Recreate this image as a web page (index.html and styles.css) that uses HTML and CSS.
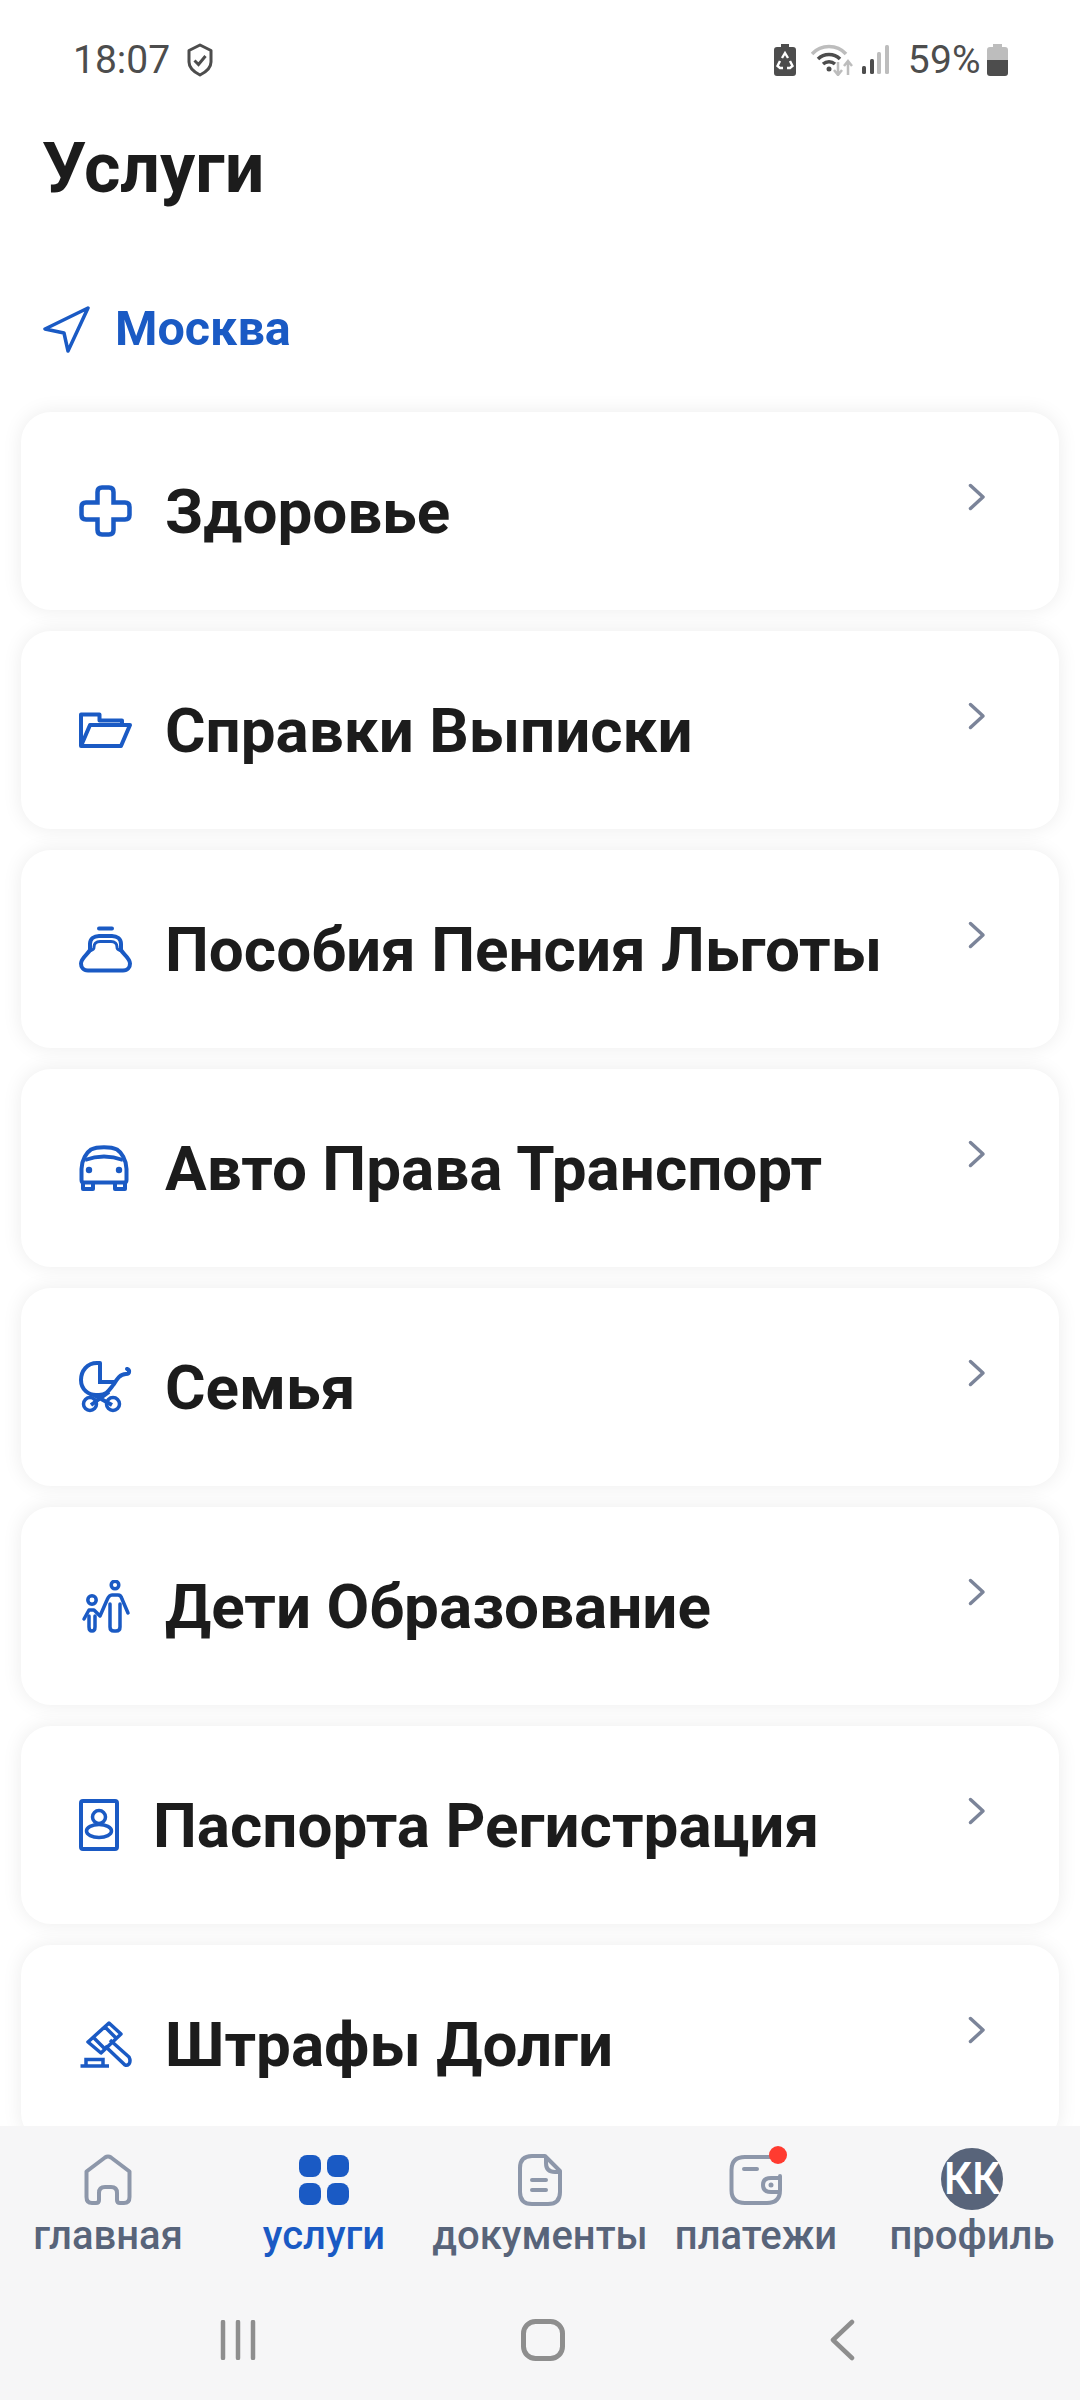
FILE: index.html
```html
<!DOCTYPE html>
<html lang="ru">
<head>
    <meta charset="UTF-8">
    <meta name="viewport" content="width=device-width, initial-scale=1.0">
    <title>Услуги</title>
    <link rel="stylesheet" href="styles.css">
</head>
<body>
    <div class="status-bar">
        <span class="status-time">18:07</span>
        <svg class="status-shield" width="26" height="34" viewBox="0 0 26 34"><path d="M13 2 24 7.500V19C24 25 19 29 13 32 7 29 2 25 2 19V7.500Z" fill="none" stroke="#4d4d4d" stroke-width="3" stroke-linejoin="round"/><path d="M7.500 17.500 11.500 21.500 18.500 13" fill="none" stroke="#4d4d4d" stroke-width="3"/></svg>
        <span class="status-spacer"></span>
        <svg class="status-saver" width="22" height="32" viewBox="0 0 22 32"><path d="M7 0H15V3H19Q22 3 22 6V29Q22 32 19 32H3Q0 32 0 29V6Q0 3 3 3H7Z" fill="#4d4d4d"/><path d="M8 14 11 9 14 14M16 17 18.500 22 16 24H13M9 24H6L3.500 22 6 17" fill="none" stroke="#fff" stroke-width="2.400"/></svg>
        <svg class="status-wifi" width="43" height="32" viewBox="0 0 43 32"><path d="M1 10C10 0 26 0 35 10" fill="none" stroke="#bdbdbd" stroke-width="3.500"/><path d="M7 15C13 9 23 9 29 15M12 20C15.500 17 20.500 17 24 20" fill="none" stroke="#4d4d4d" stroke-width="3.500"/><circle cx="18" cy="25" r="2.500" fill="#4d4d4d"/><path d="M27 18V30M23 26 27 31 31 26" fill="none" stroke="#bdbdbd" stroke-width="2.500"/><path d="M37 31V18M33 22 37 17 41 22" fill="none" stroke="#bdbdbd" stroke-width="2.500"/></svg>
        <svg class="status-signal" width="27" height="30" viewBox="0 0 27 30"><rect x="0" y="21" width="4" height="8" rx="1.500" fill="#4d4d4d"/><rect x="8" y="14" width="4" height="15" rx="1.500" fill="#4d4d4d"/><rect x="15" y="7" width="4" height="22" rx="1.500" fill="#bdbdbd"/><rect x="23" y="0" width="4" height="29" rx="1.500" fill="#bdbdbd"/></svg>
        <span class="status-percent">59%</span>
        <svg class="status-battery" width="21" height="32" viewBox="0 0 21 32"><path d="M6 0H15V3H18Q21 3 21 6V16H0V6Q0 3 3 3H6Z" fill="#bdbdbd"/><path d="M0 16H21V29Q21 32 18 32H3Q0 32 0 29Z" fill="#4d4d4d"/></svg>
    </div>

    <h1 class="page-title">Услуги</h1>

    <div class="location">
        <svg width="47" height="47" viewBox="0 0 47 47"><path d="M45 2 2 23 21 27 25 45Z" fill="none" stroke="#1a5ac4" stroke-width="3.500" stroke-linejoin="round"/></svg>
        <span>Москва</span>
    </div>

    <main class="service-list">
        <a class="service-card">
            <svg class="service-icon" width="53" height="52" viewBox="0 0 53 52"><path d="M23 2.500H30Q34.500 2.500 34.500 7V17.500H46Q50.500 17.500 50.500 22V30Q50.500 34.500 46 34.500H34.500V45Q34.500 49.500 30 49.500H23Q18.500 49.500 18.500 45V34.500H7Q2.500 34.500 2.500 30V22Q2.500 17.500 7 17.500H18.500V7Q18.500 2.500 23 2.500Z" fill="none" stroke="#1a5ac4" stroke-width="4.500"/></svg>
            <span class="service-name">Здоровье</span>
            <svg class="service-arrow" width="18" height="28" viewBox="0 0 18 28"><path d="M2.500 2.500 15 14 2.500 25.500" fill="none" stroke="#7b8499" stroke-width="3.500" stroke-linecap="round" stroke-linejoin="round"/></svg>
        </a>
        <a class="service-card">
            <svg class="service-icon" width="53" height="37" viewBox="0 0 53 37"><path d="M2 34V2.500H20.500V8.500H43V13" fill="none" stroke="#1a5ac4" stroke-width="4" stroke-linejoin="round"/><path d="M2 34 11 13H51L42 34Z" fill="none" stroke="#1a5ac4" stroke-width="4" stroke-linejoin="round"/></svg>
            <span class="service-name">Справки Выписки</span>
            <svg class="service-arrow" width="18" height="28" viewBox="0 0 18 28"><path d="M2.500 2.500 15 14 2.500 25.500" fill="none" stroke="#7b8499" stroke-width="3.500" stroke-linecap="round" stroke-linejoin="round"/></svg>
        </a>
        <a class="service-card">
            <svg class="service-icon" width="53" height="47" viewBox="0 0 53 47"><path d="M20 2.500H33" fill="none" stroke="#1a5ac4" stroke-width="4" stroke-linecap="round"/><path d="M9 44.500H44C49 44.500 51 41 51 37.500 51 32 44 28 42 24V18C42 13 38 10 33 10H20C15 10 11 13 11 18V24C9 28 2 32 2 37.500 2 41 4 44.500 9 44.500Z" fill="none" stroke="#1a5ac4" stroke-width="4"/><path d="M11 25C15 23 15 23 15 21 15 18 17 15.500 21 15.500H32C36 15.500 38 18 38 21 38 23 38 23 42 25" fill="none" stroke="#1a5ac4" stroke-width="3"/></svg>
            <span class="service-name">Пособия Пенсия Льготы</span>
            <svg class="service-arrow" width="18" height="28" viewBox="0 0 18 28"><path d="M2.500 2.500 15 14 2.500 25.500" fill="none" stroke="#7b8499" stroke-width="3.500" stroke-linecap="round" stroke-linejoin="round"/></svg>
        </a>
        <a class="service-card">
            <svg class="service-icon" width="53" height="46" viewBox="0 0 53 46"><path d="M2.500 35V24C2.500 15 8 7 12 4.500 18 1.500 32 1.500 38 4.500 42 7 47.500 15 47.500 24V35Q47.500 37.500 45 37.500H5Q2.500 37.500 2.500 35Z" fill="none" stroke="#1a5ac4" stroke-width="4"/><path d="M6 15C18 10.500 32 10.500 44 15" fill="none" stroke="#1a5ac4" stroke-width="4"/><circle cx="10" cy="25" r="3.200" fill="#1a5ac4"/><circle cx="40" cy="25" r="3.200" fill="#1a5ac4"/><path d="M4 37V44H14V37M36 37V44H46V37" fill="none" stroke="#1a5ac4" stroke-width="4" stroke-linejoin="round"/></svg>
            <span class="service-name">Авто Права Транспорт</span>
            <svg class="service-arrow" width="18" height="28" viewBox="0 0 18 28"><path d="M2.500 2.500 15 14 2.500 25.500" fill="none" stroke="#7b8499" stroke-width="3.500" stroke-linecap="round" stroke-linejoin="round"/></svg>
        </a>
        <a class="service-card">
            <svg class="service-icon" width="53" height="52" viewBox="0 0 53 52"><path d="M21 2H18C8 2 2 10 2 19 2 29 10 34 17 34H20C28 34 30 29 35 23 38 18 41 13 47 13 51 13 51 9 48 8" fill="none" stroke="#1a5ac4" stroke-width="4" stroke-linecap="round"/><path d="M21 2V21H37M15 34 33 44M30 31 12 44" fill="none" stroke="#1a5ac4" stroke-width="4"/><circle cx="11" cy="43" r="6.500" fill="none" stroke="#1a5ac4" stroke-width="3.500"/><circle cx="34" cy="43" r="6.500" fill="none" stroke="#1a5ac4" stroke-width="3.500"/></svg>
            <span class="service-name">Семья</span>
            <svg class="service-arrow" width="18" height="28" viewBox="0 0 18 28"><path d="M2.500 2.500 15 14 2.500 25.500" fill="none" stroke="#7b8499" stroke-width="3.500" stroke-linecap="round" stroke-linejoin="round"/></svg>
        </a>
        <a class="service-card">
            <svg class="service-icon" width="53" height="53" viewBox="0 0 53 53"><g transform="translate(4 0)" fill="none" stroke="#1a5ac4" stroke-width="3.500" stroke-linecap="round" stroke-linejoin="round"><circle cx="32" cy="5" r="3.800"/><circle cx="9" cy="20" r="4.200"/><path d="M1 39 6 30H11L17 36 24 20Q26 15 29 15H35Q38 15 39 19L45 33"/><path d="M27 24V47Q27 51 31 51H33Q37 51 37 47V24"/><path d="M6 36V47Q6 51 9 51 12 51 12 47V36"/></g></svg>
            <span class="service-name">Дети Образование</span>
            <svg class="service-arrow" width="18" height="28" viewBox="0 0 18 28"><path d="M2.500 2.500 15 14 2.500 25.500" fill="none" stroke="#7b8499" stroke-width="3.500" stroke-linecap="round" stroke-linejoin="round"/></svg>
        </a>
        <a class="service-card">
            <svg class="service-icon" width="41" height="52" viewBox="0 0 41 52"><rect x="2" y="2" width="36" height="48" rx="2" fill="none" stroke="#1a5ac4" stroke-width="4"/><ellipse cx="20" cy="18" rx="6.500" ry="6.500" fill="none" stroke="#1a5ac4" stroke-width="3.500"/><ellipse cx="20" cy="32" rx="12.500" ry="6.500" fill="none" stroke="#1a5ac4" stroke-width="3.500"/></svg>
            <span class="service-name">Паспорта Регистрация</span>
            <svg class="service-arrow" width="18" height="28" viewBox="0 0 18 28"><path d="M2.500 2.500 15 14 2.500 25.500" fill="none" stroke="#7b8499" stroke-width="3.500" stroke-linecap="round" stroke-linejoin="round"/></svg>
        </a>
        <a class="service-card">
            <svg class="service-icon" width="53" height="47" viewBox="0 0 53 47"><path d="M1.500 45H30M7 44V38.500H24V44" fill="none" stroke="#1a5ac4" stroke-width="3.500"/><path d="M9 21 30 2 42 13 22 32ZM14 16 26 28M26 6 37 17" fill="none" stroke="#1a5ac4" stroke-width="3.500" stroke-linejoin="round"/><path d="M31 19 50 36Q52 40 50 43 48 45 46 44L26 25" fill="none" stroke="#1a5ac4" stroke-width="3.500"/></svg>
            <span class="service-name">Штрафы Долги</span>
            <svg class="service-arrow" width="18" height="28" viewBox="0 0 18 28"><path d="M2.500 2.500 15 14 2.500 25.500" fill="none" stroke="#7b8499" stroke-width="3.500" stroke-linecap="round" stroke-linejoin="round"/></svg>
        </a>
    </main>

    <nav class="tab-bar">
        <a class="tab">
            <svg class="tab-icon" width="48" height="52" viewBox="0 0 48 52"><path d="M2.500 17.500 21 3.500Q24 1.500 27 3.500L45.500 17.500V43Q45.500 49 40 49H36Q33 49 33 46V39Q33 33 27 33H21Q15 33 15 39V46Q15 49 12 49H8Q2.500 49 2.500 43Z" fill="none" stroke="#8d97aa" stroke-width="4" stroke-linejoin="round"/></svg>
            <span>главная</span>
        </a>
        <a class="tab tab-active">
            <svg class="tab-icon" width="50" height="52" viewBox="0 0 50 52"><rect x="0" y="1" width="22" height="22" rx="8" fill="#1a5ac4"/><rect x="28" y="1" width="22" height="22" rx="8" fill="#1a5ac4"/><rect x="0" y="29" width="22" height="22" rx="8" fill="#1a5ac4"/><rect x="28" y="29" width="22" height="22" rx="8" fill="#1a5ac4"/></svg>
            <span>услуги</span>
        </a>
        <a class="tab">
            <svg class="tab-icon" width="44" height="52" viewBox="0 0 44 52"><path d="M14 2H27L42 17V38Q42 50 30 50H14Q2 50 2 38V14Q2 2 14 2Z" fill="none" stroke="#8d97aa" stroke-width="4" stroke-linejoin="round"/><path d="M28 3V9Q28 18 37 18H42" fill="none" stroke="#8d97aa" stroke-width="4"/><path d="M14 26H28M14 36H28" stroke="#8d97aa" stroke-width="4" stroke-linecap="round"/></svg>
            <span>документы</span>
        </a>
        <a class="tab">
            <span class="tab-wallet">
                <svg class="tab-icon" width="54" height="52" viewBox="0 0 54 52"><path d="M41 3H16Q2.500 3 2.500 16V36Q2.500 49 16 49H38Q51 49 51 36V22M15 15H28" fill="none" stroke="#8d97aa" stroke-width="4" stroke-linecap="round"/><path d="M51 24H42Q34 24 34 31 34 38 42 38H51" fill="none" stroke="#8d97aa" stroke-width="4"/><circle cx="42" cy="31" r="2.500" fill="#8d97aa"/></svg>
                <span class="tab-dot"></span>
            </span>
            <span>платежи</span>
        </a>
        <a class="tab">
            <span class="tab-avatar">КК</span>
            <span>профиль</span>
        </a>
    </nav>

    <div class="system-nav">
        <svg width="36" height="40" viewBox="0 0 36 40"><path d="M3 2V38M18 2V38M33 2V38" stroke="#8e8e8e" stroke-width="4.500" stroke-linecap="round"/></svg>
        <svg width="44" height="42" viewBox="0 0 44 42"><rect x="2.500" y="2.500" width="39" height="37" rx="12" fill="none" stroke="#8e8e8e" stroke-width="5"/></svg>
        <svg width="26" height="42" viewBox="0 0 26 42"><path d="M23 3 4 21 23 39" fill="none" stroke="#8e8e8e" stroke-width="4.500" stroke-linecap="round" stroke-linejoin="round"/></svg>
    </div>
</body>
</html>
```

FILE: styles.css
```css
* {
    box-sizing: border-box;
}

body {
    font-family: 'Roboto', 'Liberation Sans', sans-serif;
    margin: 0;
    width: 1080px;
    height: 2400px;
    display: flex;
    flex-direction: column;
    background-color: #fff;
    color: #1c1c1c;
    overflow: hidden;
}

.status-bar {
    height: 84px;
    flex: none;
    display: flex;
    align-items: center;
    padding: 36px 72px 0 73px;
    color: #4d4d4d;
    font-size: 39px;
}

.status-shield {
    margin-left: 17px;
}

.status-spacer {
    flex: 1;
}

.status-wifi {
    margin-left: 15px;
}

.status-signal {
    margin-left: 8px;
}

.status-percent {
    margin-left: 19px;
    letter-spacing: 0.3px;
}

.status-battery {
    margin-left: 6px;
}

.page-title {
    margin: 44px 0 0 42px;
    font-size: 70px;
    line-height: 80px;
    font-weight: 700;
}

.location {
    margin: 96px 0 0 43px;
    display: flex;
    align-items: center;
    gap: 25px;
    color: #1a5ac4;
    font-size: 48.5px;
    font-weight: 700;
    line-height: 50px;
}

.service-list {
    flex: 1;
    min-height: 0;
    overflow: hidden;
    margin-top: 38px;
    padding: 20px 21px 0;
    display: flex;
    flex-direction: column;
    gap: 21px;
}

.service-card {
    flex: none;
    height: 198px;
    padding: 0 73px 0 58px;
    display: flex;
    align-items: center;
    background-color: #fff;
    border-radius: 30px;
    box-shadow: 0 0 20px rgba(0, 0, 0, 0.08);
}

.service-icon {
    flex: none;
    margin-right: 33px;
}

.service-name {
    flex: 1;
    font-size: 62px;
    font-weight: 700;
}

.service-arrow {
    align-self: flex-start;
    margin-top: 71px;
}

.tab-bar {
    flex: none;
    height: 149px;
    padding-top: 28px;
    display: grid;
    grid-template-columns: repeat(5, 216px);
    background-color: #f6f6f7;
}

.tab {
    display: flex;
    flex-direction: column;
    align-items: center;
    gap: 6px;
    color: #58647a;
    font-size: 40px;
    font-weight: 500;
    line-height: 48px;
    white-space: nowrap;
}

.tab-active {
    color: #1a5ac4;
}

.tab-icon {
    display: block;
}

.tab-wallet {
    position: relative;
    height: 52px;
}

.tab-dot {
    position: absolute;
    top: -8px;
    right: -4px;
    width: 18px;
    height: 18px;
    border-radius: 50%;
    background-color: #ff3b30;
}

.tab-avatar {
    width: 62px;
    height: 62px;
    margin-top: -6px;
    margin-bottom: -4px;
    border-radius: 50%;
    background-color: #58647a;
    color: #fff;
    font-size: 44px;
    line-height: 62px;
    text-align: center;
}

.system-nav {
    flex: none;
    height: 125px;
    padding: 4px 225px 0 220px;
    display: flex;
    align-items: center;
    justify-content: space-between;
    background-color: #f6f6f7;
}
```
